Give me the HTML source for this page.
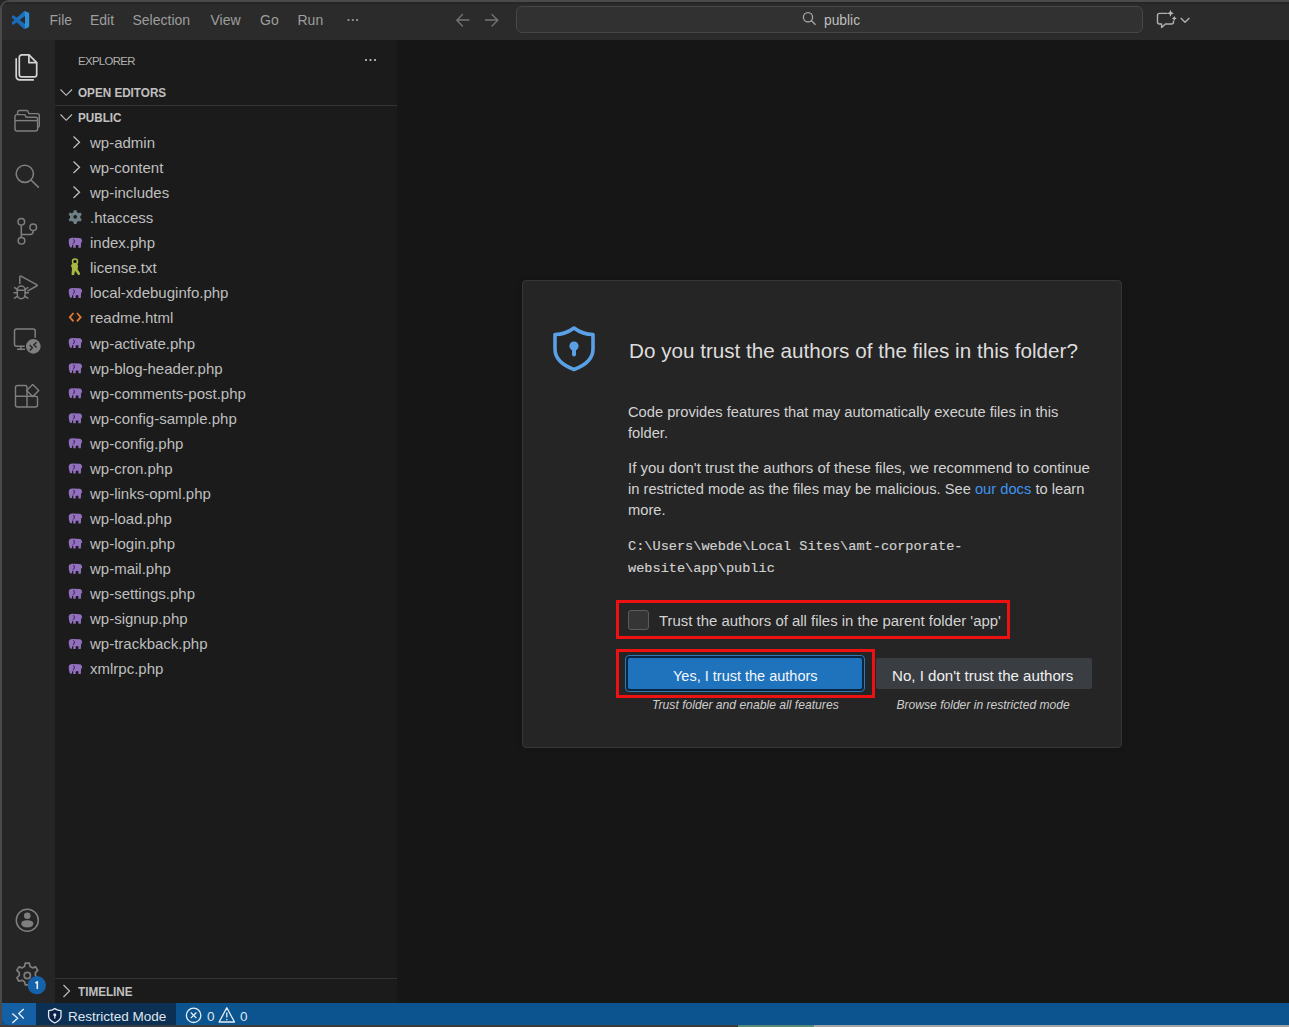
<!DOCTYPE html>
<html><head><meta charset="utf-8">
<style>
*{margin:0;padding:0;box-sizing:border-box}
html,body{width:1289px;height:1027px;overflow:hidden;background:#262626;font-family:"Liberation Sans",sans-serif}
div{position:absolute;white-space:nowrap}
.bg{left:0;top:0}
.menu{top:12px;font-size:14px;color:#9e9e9e;line-height:16px}
.hdr{font-size:13.6px;font-weight:bold;color:#c0c0c0;line-height:14px;transform:scaleX(0.86);transform-origin:0 0}
.row{left:90px;font-size:15px;color:#bfbfbf;line-height:18px}
.p{left:628px;font-size:14.7px;color:#d2d2d2;line-height:18px}
.mono{left:628px;font-family:"Liberation Mono",monospace;font-size:13.6px;color:#d2d2d2;line-height:16px;-webkit-text-stroke:0.15px #d2d2d2}
.cap{font-style:italic;font-size:12.15px;color:#cdcdcd;line-height:14px}
svg{position:absolute;left:0;top:0}
</style></head><body>
<!-- window frame -->
<div style="left:0;top:0;width:1289px;height:1027px;background:#161616;border-top:2px solid #4a4a4a;border-left:2px solid #4a4a4a;border-top-left-radius:9px;overflow:hidden">
  <!-- titlebar -->
  <div style="left:0;top:0;width:1289px;height:38px;background:#2b2b2b;border-top:2px solid #262626"></div>
  <!-- activity bar -->
  <div style="left:0;top:38px;width:53px;height:965px;background:#252525"></div>
  <!-- sidebar -->
  <div style="left:53px;top:38px;width:342px;height:965px;background:#1b1b1b"></div>
</div>

<!-- titlebar content -->
<div class="menu" style="left:49.5px">File</div>
<div class="menu" style="left:90px">Edit</div>
<div class="menu" style="left:132.5px">Selection</div>
<div class="menu" style="left:210.5px">View</div>
<div class="menu" style="left:260px">Go</div>
<div class="menu" style="left:297.5px">Run</div>
<div style="left:516px;top:6px;width:627px;height:27px;border:1px solid #474747;border-radius:6px;background:#313131"></div>
<div style="left:824px;top:13px;font-size:13.8px;color:#bfbfbf;line-height:16px">public</div>

<!-- sidebar content -->
<div style="left:78px;top:54px;font-size:11.4px;color:#b0b0b0;line-height:14px;letter-spacing:-0.65px">EXPLORER</div>
<div class="hdr" style="left:78px;top:86px">OPEN EDITORS</div>
<div style="left:55px;top:105px;width:342px;height:1px;background:#333333"></div>
<div class="hdr" style="left:78px;top:111px">PUBLIC</div>


<div class="row" style="top:134.00px">wp-admin</div>
<div class="row" style="top:159.07px">wp-content</div>
<div class="row" style="top:184.14px">wp-includes</div>
<div class="row" style="top:209.21px">.htaccess</div>
<div class="row" style="top:234.28px">index.php</div>
<div class="row" style="top:259.35px">license.txt</div>
<div class="row" style="top:284.42px">local-xdebuginfo.php</div>
<div class="row" style="top:309.49px">readme.html</div>
<div class="row" style="top:334.56px">wp-activate.php</div>
<div class="row" style="top:359.63px">wp-blog-header.php</div>
<div class="row" style="top:384.70px">wp-comments-post.php</div>
<div class="row" style="top:409.77px">wp-config-sample.php</div>
<div class="row" style="top:434.84px">wp-config.php</div>
<div class="row" style="top:459.91px">wp-cron.php</div>
<div class="row" style="top:484.98px">wp-links-opml.php</div>
<div class="row" style="top:510.05px">wp-load.php</div>
<div class="row" style="top:535.12px">wp-login.php</div>
<div class="row" style="top:560.19px">wp-mail.php</div>
<div class="row" style="top:585.26px">wp-settings.php</div>
<div class="row" style="top:610.33px">wp-signup.php</div>
<div class="row" style="top:635.40px">wp-trackback.php</div>
<div class="row" style="top:660.47px">xmlrpc.php</div>

<div style="left:55px;top:978px;width:342px;height:1px;background:#333333"></div>
<div class="hdr" style="left:78px;top:985px">TIMELINE</div>

<!-- status bar -->
<div style="left:2px;top:1003px;width:1287px;height:22px;background:#0b5490"></div>
<div style="left:2px;top:1003px;width:34px;height:22px;background:#155fa4;border-bottom-left-radius:8px"></div>
<div style="left:36px;top:1003px;width:140px;height:22px;background:#0b3054"></div>
<div style="left:0;top:1025px;width:738px;height:2px;background:#3a3d40"></div><div style="left:738px;top:1025px;width:76px;height:2px;background:#5d8878"></div><div style="left:814px;top:1025px;width:475px;height:2px;background:#a0a5aa"></div>
<div style="left:68px;top:1009px;font-size:13.5px;color:#dfe6ee;line-height:16px">Restricted Mode</div>
<div style="left:207px;top:1009px;font-size:13.5px;color:#dfe6ee;line-height:16px">0</div>
<div style="left:240px;top:1009px;font-size:13.5px;color:#dfe6ee;line-height:16px">0</div>

<!-- dialog -->
<div style="left:522px;top:280px;width:600px;height:468px;background:#252525;border:1px solid #363636;border-radius:4px;box-shadow:0 0 6px rgba(0,0,0,0.2)"></div>
<div style="left:629px;top:339px;font-size:20.66px;color:#dddddd;line-height:24px">Do you trust the authors of the files in this folder?</div>
<div class="p" style="top:403px">Code provides features that may automatically execute files in this</div>
<div class="p" style="top:424px">folder.</div>
<div class="p" style="top:459px;font-size:14.99px">If you don't trust the authors of these files, we recommend to continue</div>
<div class="p" style="top:480px">in restricted mode as the files may be malicious. See <span style="color:#3d94f0">our docs</span> to learn</div>
<div class="p" style="top:501px">more.</div>
<div class="mono" style="top:539px">C:\Users\webde\Local Sites\amt-corporate-</div>
<div class="mono" style="top:561px">website\app\public</div>

<!-- checkbox -->
<div style="left:616px;top:600px;width:394px;height:39px;border:3.7px solid #ee1111"></div>
<div style="left:628px;top:610px;width:21px;height:20px;background:#353535;border:1px solid #5c5c5c;border-radius:3px"></div>
<div class="p" style="left:659px;top:612px;font-size:14.93px">Trust the authors of all files in the parent folder 'app'</div>

<!-- buttons -->
<div style="left:616px;top:649px;width:259px;height:49px;border:3.7px solid #ee1111"></div>
<div style="left:625px;top:655px;width:240px;height:37px;border:1px solid #2f78b8;border-radius:4px;background:#0a2540"></div>
<div style="left:628px;top:658px;width:234px;height:31px;background:#1f72bc;border-radius:2px"></div>
<div style="left:673px;top:666.5px;font-size:14.5px;color:#f4f8fc;line-height:18px">Yes, I trust the authors</div>
<div style="left:876px;top:658px;width:216px;height:31px;background:#3a3d41;border-radius:2px"></div>
<div style="left:892px;top:666.5px;font-size:15.08px;color:#f0f0f0;line-height:18px">No, I don't trust the authors</div>
<div class="cap" style="left:652px;top:697.5px">Trust folder and enable all features</div>
<div class="cap" style="left:896.5px;top:697.5px;font-size:12.09px">Browse folder in restricted mode</div>

<!-- icons overlay -->
<svg width="1289" height="1027" viewBox="0 0 1289 1027">
  <!-- vscode logo -->
  <defs><clipPath id="lc"><path d="M96.46 10.8L75.86.87a6.23 6.23 0 0 0-7.1 1.2L29.35 38.04 12.19 25.01a4.160 4.16 0 0 0-5.32.24L1.370 30.25a4.17 4.17 0 0 0 0 6.16L16.26 50 1.37 63.59a4.17 4.17 0 0 0 0 6.16l5.5 5a4.16 4.16 0 0 0 5.32.24l17.16-13.03 39.41 35.96a6.2 6.2 0 0 0 7.1 1.2l20.6-9.92A6.25 6.25 0 0 0 100 83.6V16.4a6.25 6.25 0 0 0-3.54-5.6zM75.01 72.7L45.11 50l29.9-22.7z"/></clipPath></defs>
  <g transform="translate(11.5,11) scale(0.18)">
    <g clip-path="url(#lc)">
      <rect x="0" y="0" width="100" height="100" fill="#1c6fbd"/>
      <rect x="74" y="0" width="26" height="100" fill="#2f8fd6"/>
      <path d="M0 25L75 85V100H0Z" fill="#1a66b0" opacity="0.6"/>
    </g>
  </g>
  <!-- menu ellipsis -->
  <g fill="#9e9e9e"><circle cx="348.5" cy="20" r="1.1"/><circle cx="352.8" cy="20" r="1.1"/><circle cx="357.1" cy="20" r="1.1"/></g>
  <!-- nav arrows -->
  <g stroke="#757575" stroke-width="1.3" fill="none" stroke-linecap="round">
    <path d="M469 20H457M462.5 14.5L456.8 20.2L462.5 26"/>
    <path d="M485.5 20H497.5M492 14.5L497.8 20.2L492 26"/>
  </g>
  <!-- search magnifier -->
  <g stroke="#a8a8a8" stroke-width="1.3" fill="none">
    <circle cx="808" cy="17.2" r="4.6"/><path d="M811.3 20.5L815.5 24.8"/>
  </g>
  <!-- chat icon -->
  <g stroke="#b0b0b0" stroke-width="1.4" fill="none" stroke-linejoin="round">
    <path d="M1167.5 13.4H1159.5A2 2 0 0 0 1157.5 15.4V22A2 2 0 0 0 1159.5 24H1161.6V27.6L1165.4 24H1171.5A2 2 0 0 0 1173.5 22V20.5"/>
    <path d="M1180.8 18L1185 22.2L1189.4 18"/>
  </g>
  <path fill="#b8b8b8" d="M1170.5 9.8l1 2.5 2.5 1-2.5 1-1 2.5-1-2.5-2.5-1 2.5-1z"/>
  <path fill="#b8b8b8" d="M1174.3 16l.8 1.6 1.6.8-1.6.8-.8 1.6-.8-1.6-1.6-.8 1.6-.8z"/>

  <!-- activity bar icons -->
  <!-- explorer (active) -->
  <g stroke="#d4d4d4" stroke-width="1.7" fill="none" stroke-linejoin="round" stroke-linecap="round">
    <path d="M21.8 54.9H29L36.7 62.6V74.4A2.4 2.4 0 0 1 34.3 76.8H21.7A2.4 2.4 0 0 1 19.3 74.4V57.3A2.4 2.4 0 0 1 21.8 54.9Z"/>
    <path d="M28.9 55.2V62.7H36.4"/>
    <path d="M16.2 58.8V76.5A3.4 3.4 0 0 0 19.6 79.9H33.2"/>
  </g>
  <!-- folder -->
  <g stroke="#7f7f7f" stroke-width="1.45" fill="none" stroke-linejoin="round">
    <path d="M15 129V116.6A2 2 0 0 1 17 114.6H24.8L26.3 117.3H35.6A2 2 0 0 1 37.6 119.3V129A2 2 0 0 1 35.6 131H17A2 2 0 0 1 15 129Z"/>
    <path d="M15 120.6H37.6"/>
    <path d="M17.6 114.4V112.5A2 2 0 0 1 19.6 110.5H27.4L29 113.6H37.3A2 2 0 0 1 39.3 115.6V125.5A2 2 0 0 1 37.8 127.4"/>
  </g>
  <!-- search -->
  <g stroke="#7f7f7f" stroke-width="1.6" fill="none">
    <circle cx="24.8" cy="173.8" r="8.6"/><path d="M31 180L38.8 187.6"/>
  </g>
  <!-- source control -->
  <g stroke="#7f7f7f" stroke-width="1.5" fill="none">
    <circle cx="21.3" cy="221.8" r="3.3"/><circle cx="33.2" cy="227.2" r="3.3"/><circle cx="21.5" cy="240.8" r="3.3"/>
    <path d="M21.3 225.1V237.5M33.2 230.5V231.5A3 3 0 0 1 30.2 234.5H21.4"/>
  </g>
  <!-- run and debug -->
  <g stroke="#7f7f7f" stroke-width="1.5" fill="none" stroke-linejoin="round" stroke-linecap="round">
    <path d="M19.8 283.5V277.2Q19.8 275.4 21.4 276.3L36.6 284.6Q37.8 285.3 36.6 286L27.8 290.8"/>
    <path d="M17.3 290A3.9 4 0 0 1 25.1 290V294.5A3.9 4.2 0 0 1 17.3 294.5Z"/>
    <path d="M17.3 290.3H25.1M14.6 287.6L17.2 289.4M27.8 287.6L25.2 289.4M14 292.8H17.2M28.4 292.8H25.2M14.6 298.2L17.4 296.3M27.8 298.2L25 296.3"/>
  </g>
  <!-- remote explorer -->
  <g stroke="#7f7f7f" stroke-width="1.5" fill="none" stroke-linejoin="round">
    <path d="M26.5 346.2H16.5A2 2 0 0 1 14.5 344.2V331A2 2 0 0 1 16.5 329H33.2A2 2 0 0 1 35.2 331V337.8"/>
    <path d="M20.8 346.2V348.8M17 349.2H25"/>
  </g>
  <circle cx="33.3" cy="346.4" r="8" fill="#7f7f7f" stroke="#252525" stroke-width="1.3"/>
  <path d="M29.7 345L32.4 347.7L29.7 350.4M36.6 342.2L33.9 344.8L36.6 347.4" stroke="#252525" stroke-width="1.4" fill="none"/>
  <!-- extensions -->
  <g stroke="#7f7f7f" stroke-width="1.4" fill="none" stroke-linejoin="round">
    <path d="M15.5 387.5A2 2 0 0 1 17.5 385.5H25A2 2 0 0 1 27 387.5V396.2H35.5A2 2 0 0 1 37.5 398.2V405A2 2 0 0 1 35.5 407H17.5A2 2 0 0 1 15.5 405Z"/>
    <path d="M15.5 396.2H27V407"/>
    <path d="M32.7 384.4L38.8 390.5L32.7 396.6L26.6 390.5Z"/>
  </g>
  <!-- account -->
  <g fill="none" stroke="#7f7f7f" stroke-width="1.5"><circle cx="27.3" cy="920.3" r="11"/></g>
  <g fill="#7f7f7f"><circle cx="27.3" cy="915.8" r="3.3"/><path d="M21.3 923.6C21.3 921.1 24 920.3 27.3 920.3C30.6 920.3 33.3 921.1 33.3 923.6C33.3 926.6 30.5 927.4 27.3 927.4C24 927.4 21.3 926.6 21.3 923.6Z"/></g>
  <!-- manage gear -->
  <g fill="none" stroke="#7f7f7f" stroke-width="1.5" stroke-linejoin="round">
    <g transform="translate(27.3,975.5) scale(1.12) translate(-27.3,-975.5)"><path d="M25.5 964.5h3.6l.7 2.9 2.2 1.3 2.8-.9 1.8 3.1-2.1 2v2.6l2.1 2-1.8 3.1-2.8-.9-2.2 1.3-.7 2.9h-3.6l-.7-2.9-2.2-1.3-2.8.9-1.8-3.1 2.1-2v-2.6l-2.1-2 1.8-3.1 2.8.9 2.2-1.3z"/>
    <circle cx="27.3" cy="975.5" r="2.8"/></g>
  </g>
  <circle cx="36.8" cy="985.2" r="9.1" fill="#1463aa"/>
  <path d="M35.3 983.2L37.3 981.8V989" stroke="#e8eef5" stroke-width="1.6" fill="none" stroke-linejoin="round"/>

  <!-- sidebar: explorer ellipsis -->
  <g fill="#c5c5c5"><circle cx="366" cy="60" r="1.1"/><circle cx="370.5" cy="60" r="1.1"/><circle cx="375" cy="60" r="1.1"/></g>
  <!-- section chevrons -->
  <g stroke="#bdbdbd" stroke-width="1.15" fill="none">
    <path d="M60.5 89.5L66.2 95.3L72 89.5"/>
    <path d="M60.5 114.5L66.2 120.3L72 114.5"/>
    <path d="M63.5 985L69.5 991L63.5 997"/>
  </g>
  <!-- folder chevrons -->
  <g stroke="#c0c0c0" stroke-width="1.3" fill="none">
    <path d="M73.5 136.5L79.5 142.3L73.5 148"/>
    <path d="M73.5 161.5L79.5 167.3L73.5 173"/>
    <path d="M73.5 186.5L79.5 192.3L73.5 198"/>
  </g>
  <!-- htaccess gear -->
  <g transform="translate(75.2,216.8)">
    <path fill="#6d8086" d="M-1.3-6.5h2.6l.5 2 1.5.9 2-.6 1.3 2.2-1.5 1.4v1.8l1.5 1.4-1.3 2.2-2-.6-1.5.9-.5 2h-2.6l-.5-2-1.5-.9-2 .6-1.3-2.2 1.5-1.4v-1.8l-1.5-1.4 1.3-2.2 2 .6 1.5-.9z"/>
    <circle r="1.9" fill="#1b1b1b"/>
  </g>
  <!-- license key -->
  <circle cx="75" cy="261.4" r="2.5" fill="none" stroke="#a9b944" stroke-width="1.5"/>
  <path fill="#a9b944" d="M70.9 265.2Q72.2 263 75 263.6Q77.6 263.3 78.1 265.6L77.6 269.2L80.1 273.4Q80.1 275.3 78.2 275.1L75.1 270.8L74.2 274.8Q72.6 275.6 71.5 274.6L72 268.6Z"/>
  <!-- readme html <> -->
  <g stroke="#e37933" stroke-width="1.8" fill="none">
    <path d="M73.5 313L69.8 317.2L73.5 321.4M77 313L80.7 317.2L77 321.4"/>
  </g>
  <!-- php elephants -->
  <defs>
    <g id="eph">
      <path fill="#9270bf" d="M-6.5-1.8C-6.5-4 -5-5 -3-5L4.5-4.7C6-4.5 6.8-3.3 6.8-2L7-0.5L6-0.7L5.6 5L3.2 5L3.2 2.3L0.5 2.3L0.5 5L-2 5L-2 1.8C-3 1.8-3.3 3-3.2 4.5L-5 4.8C-5.7 3.5-6.5 1-6.5-1.8Z"/>
      <path stroke="#1b1b1b" stroke-width="0.9" fill="none" d="M-1.7-3.5C-0.5-2.5-0.5 0-2.2 1"/>
    </g>
  </defs>

  <use href="#eph" x="75.2" y="242.78"/>
  <use href="#eph" x="75.2" y="292.92"/>
  <use href="#eph" x="75.2" y="343.06"/>
  <use href="#eph" x="75.2" y="368.13"/>
  <use href="#eph" x="75.2" y="393.20"/>
  <use href="#eph" x="75.2" y="418.27"/>
  <use href="#eph" x="75.2" y="443.34"/>
  <use href="#eph" x="75.2" y="468.41"/>
  <use href="#eph" x="75.2" y="493.48"/>
  <use href="#eph" x="75.2" y="518.55"/>
  <use href="#eph" x="75.2" y="543.62"/>
  <use href="#eph" x="75.2" y="568.69"/>
  <use href="#eph" x="75.2" y="593.76"/>
  <use href="#eph" x="75.2" y="618.83"/>
  <use href="#eph" x="75.2" y="643.90"/>
  <use href="#eph" x="75.2" y="668.97"/>

  <!-- status bar icons -->
  <g stroke="#e6edf5" stroke-width="1.4" fill="none">
    <path d="M12.3 1013.5L17.6 1018.2L12.3 1023M23.8 1008.9L18.8 1013.6L23.8 1018.6"/>
  </g>
  <path d="M54.8 1008.6C52.8 1010 50.8 1010.6 48.6 1010.6V1015.8C48.6 1019.4 51.2 1021.5 54.8 1023C58.4 1021.5 61 1019.4 61 1015.8V1010.6C58.8 1010.6 56.8 1010 54.8 1008.6Z" fill="#0a2248" stroke="#e2e9f0" stroke-width="1.3" stroke-linejoin="round"/>
  <circle cx="54.8" cy="1014.8" r="1.5" fill="#e2e9f0"/><path d="M54.8 1015V1018.4" stroke="#e2e9f0" stroke-width="1.3"/>
  <g stroke="#e6edf5" stroke-width="1.3" fill="none">
    <circle cx="193.6" cy="1015.3" r="7.2"/>
    <path d="M190.8 1012.5L196.4 1018.1M196.4 1012.5L190.8 1018.1"/>
    <path d="M226.8 1007.8L234.5 1022H219.1Z" stroke-linejoin="round"/>
    <path d="M226.8 1012.5V1017.5M226.8 1019V1020.3"/>
  </g>

  <!-- dialog shield -->
  <g fill="none" stroke="#5aa0e6" stroke-width="3.6" stroke-linejoin="round">
    <path d="M574 328C568 332.5 561.5 334.5 555 334.5V349C555 359 562 365 574 369.5C586 365 593 359 593 349V334.5C586.5 334.5 580 332.5 574 328Z"/>
  </g>
  <circle cx="574" cy="346" r="4.6" fill="#5aa0e6"/>
  <path d="M574 347.5V354.5" stroke="#5aa0e6" stroke-width="4" stroke-linecap="round"/>
</svg>
</body></html>
